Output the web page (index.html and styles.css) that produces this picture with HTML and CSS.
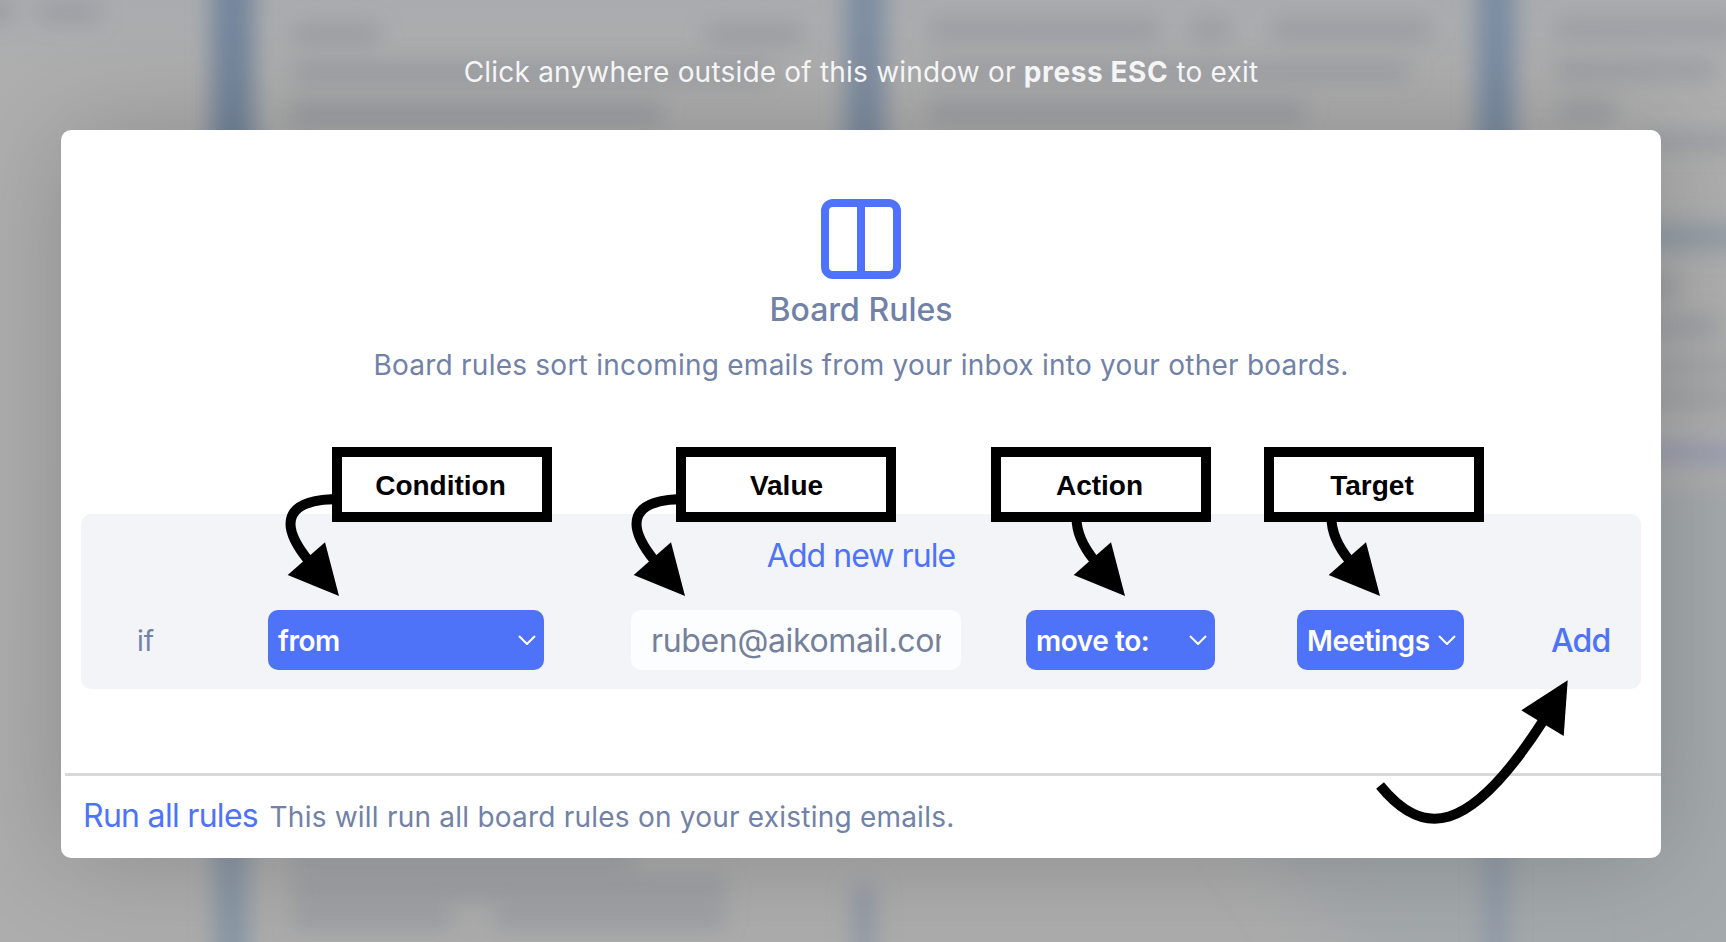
FILE: index.html
```
<!DOCTYPE html>
<html lang="en">
<head>
<meta charset="utf-8">
<title>Board Rules</title>
<link rel="stylesheet" href="styles.css">
</head>
<body>
<svg class="backdrop" viewBox="0 0 1726 942" aria-hidden="true">
  <defs>
    <filter id="soft" x="-20%" y="-20%" width="140%" height="140%"><feGaussianBlur stdDeviation="11"/></filter>
    <filter id="softer" x="-20%" y="-20%" width="140%" height="140%"><feGaussianBlur stdDeviation="28"/></filter>
    <linearGradient id="base" x1="0" y1="0" x2="0" y2="1"><stop offset="0" stop-color="#a9abae"/><stop offset=".08" stop-color="#afafaf"/><stop offset="1" stop-color="#adadad"/></linearGradient>
  </defs>
  <rect width="1726" height="942" fill="url(#base)"/>
  <g filter="url(#softer)">
    <path d="M1240 810L1800 450V1000H1380Z" fill="#a4a9ac"/>
  </g>
  <g filter="url(#soft)">
    <rect x="1640" y="490" width="140" height="500" fill="#a4a9ac"/>
    <rect x="211" y="-30" width="43" height="840" fill="#75869c"/>
    <rect x="214" y="800" width="34" height="180" fill="#8896a4"/>
    <rect x="845" y="-30" width="40" height="840" fill="#7e8da1"/>
    <rect x="852" y="885" width="24" height="95" fill="#9299a6"/>
    <rect x="1477" y="-30" width="38" height="800" fill="#7a8ca2"/>
    <rect x="1485" y="760" width="22" height="220" fill="#8e99a8"/>
    <g fill="#808692" opacity=".42">
      <rect x="-20" y="0" width="30" height="22"/><rect x="40" y="4" width="60" height="18"/>
      <rect x="292" y="24" width="88" height="20"/><rect x="706" y="24" width="96" height="20"/>
      <rect x="292" y="62" width="480" height="20"/><rect x="292" y="102" width="370" height="22"/>
      <rect x="930" y="20" width="230" height="20"/><rect x="1190" y="20" width="40" height="20"/><rect x="1272" y="20" width="158" height="20"/>
      <rect x="930" y="62" width="480" height="18"/><rect x="930" y="102" width="375" height="20"/>
      <rect x="1556" y="20" width="180" height="18"/><rect x="1556" y="60" width="160" height="20"/><rect x="1560" y="102" width="56" height="18"/>
      <rect x="1640" y="132" width="100" height="18"/>
      <rect x="1640" y="275" width="35" height="24"/><rect x="1640" y="318" width="80" height="18"/>
      <rect x="1640" y="360" width="110" height="12"/><rect x="1640" y="392" width="110" height="14"/>
      <rect x="292" y="850" width="340" height="14"/><rect x="292" y="878" width="435" height="20"/><rect x="292" y="908" width="160" height="20"/><rect x="495" y="908" width="230" height="20"/>
    </g>
    <rect x="1640" y="224" width="120" height="26" fill="#929ca5"/>
    <rect x="1640" y="446" width="120" height="14" fill="#9095b0"/>
  </g>
</svg>
<main class="overlay">
  <p class="hint">Click anywhere outside of this window or <b>press ESC</b> to exit</p>
  <section class="modal">
    <header class="intro">
      <svg class="board-icon" viewBox="0 0 80 80" fill="none" stroke="#4e73f8" stroke-width="8"><rect x="4" y="4" width="72" height="72" rx="8"/><path d="M40 4v72"/></svg>
      <h1 class="title">Board Rules</h1>
      <p class="lead">Board rules sort incoming emails from your inbox into your other boards.</p>
    </header>
    <div class="panel">
      <h2 class="panel-title">Add new rule</h2>
      <div class="rule">
        <span class="if">if</span>
        <div class="select select-condition"><span>from</span><svg class="chev" viewBox="0 0 18 10"><path d="M1 1l8 8 8-8"/></svg></div>
        <div class="value"><span class="value-text">ruben@aikomail.com</span></div>
        <div class="select select-action"><span>move to:</span><svg class="chev" viewBox="0 0 18 10"><path d="M1 1l8 8 8-8"/></svg></div>
        <div class="select select-target"><span>Meetings</span><svg class="chev" viewBox="0 0 18 10"><path d="M1 1l8 8 8-8"/></svg></div>
        <span class="add">Add</span>
      </div>
    </div>
    <footer class="foot"><span class="run">Run all rules</span><span class="note">This will run all board rules on your existing emails.</span></footer>
  </section>
</main>
<svg class="arrows" viewBox="0 0 1726 942" aria-hidden="true">
  <defs>
    <g id="arrow"><path d="M340 499C306 499 290.500 508 290.500 524C290.500 536 300 550 308 560" fill="none" stroke="#000" stroke-width="10"/><path d="M325 542.300L287.700 575L339 596Z"/></g>
    <g id="short"><path d="M290.500 518C290.500 536 300 550 308 560" fill="none" stroke="#000" stroke-width="10"/><path d="M325 542.300L287.700 575L339 596Z"/></g>
  </defs>
  <use href="#arrow"/><use href="#arrow" x="346"/>
  <use href="#short" x="786"/><use href="#short" x="1041"/>
  <path d="M1380 785.500C1422 837 1468 838 1543 721" fill="none" stroke="#000" stroke-width="10"/>
  <path d="M1567.700 680.300L1521.300 710.300L1563.700 736Z"/>
</svg>
<div class="tag tag-condition">Condition</div>
<div class="tag tag-value">Value</div>
<div class="tag tag-action">Action</div>
<div class="tag tag-target">Target</div>
</body>
</html>
```
FILE: styles.css
```
* { box-sizing: border-box; }
body { margin: 0; width: 1726px; height: 942px; overflow: hidden; position: relative; background: #adadad; font-family: Inter, "Liberation Sans", sans-serif; }
h1, h2, p { margin: 0; }
.backdrop, .arrows { position: absolute; inset: 0; width: 1726px; height: 942px; }
.overlay { position: relative; height: 942px; padding: 53px 65px 0 61px; }
.hint { height: 76.500px; padding-top: 1px; text-align: center; font-size: 28px; line-height: 36px; letter-spacing: .2px; color: #f5f5f5; white-space: nowrap; }
.hint b { font-weight: 700; letter-spacing: .6px; }
.modal { height: 728px; display: flex; flex-direction: column; background: #fff; border-radius: 10px; box-shadow: 0 0 110px rgba(0, 0, 0, .2); color: #7281a6; }
.intro { height: 384.500px; padding-top: 69.500px; display: flex; flex-direction: column; align-items: center; }
.board-icon { width: 80px; height: 80px; }
.title { margin-top: 10px; font-size: 32px; line-height: 41px; font-weight: 550; }
.lead { margin-top: 17px; font-size: 28px; line-height: 37px; letter-spacing: .24px; white-space: nowrap; }
.panel { height: 175px; margin: 0 20px; background: #f2f4f8; border-radius: 10px; }
.panel-title { height: 95.500px; padding-top: 22px; text-align: center; color: #4e73f8; font-size: 32px; font-weight: 400; line-height: 40px; letter-spacing: -.95px; }
.rule { display: flex; align-items: center; height: 60px; }
.if { width: 187px; padding: 2px 0 0 56px; font-size: 28px; }
.select { height: 60px; display: flex; align-items: center; justify-content: space-between; padding: 0 8px 0 10px; border-radius: 10px; background: #4e73f8; color: #fff; font-size: 28px; font-weight: 600; letter-spacing: -.45px; white-space: nowrap; }
.select span { padding-top: 2px; }
.select-condition { width: 276px; margin-right: 87px; }
.select-action { width: 189px; margin-right: 82px; }
.select-target { width: 167px; margin-right: 87px; }
.chev { flex: none; width: 18px; height: 10px; fill: none; stroke: #fff; stroke-width: 2; }
.value { width: 330px; height: 60px; margin-right: 65px; padding: 0 20px; border-radius: 10px; background: #fcfdff; color: #75809b; font-size: 32px; line-height: 62px; letter-spacing: -.35px; }
.value-text { display: block; height: 60px; overflow: hidden; white-space: nowrap; }
.add { padding-top: 1px; color: #4e73f8; font-size: 32px; font-weight: 500; letter-spacing: -.9px; }
.foot { margin: 84px 0 0 4px; height: 84px; padding-left: 18px; border-top: 3px solid #d8d8d8; display: flex; align-items: center; white-space: nowrap; }
.run { padding-bottom: 3px; color: #4e73f8; font-size: 32px; letter-spacing: -.7px; }
.note { margin-left: 11.500px; padding-top: 1px; font-size: 28px; letter-spacing: .22px; }
.tag { position: absolute; top: 447px; width: 220px; height: 75px; border: 10px solid #000; background: #fff; color: #000; display: flex; align-items: center; justify-content: center; padding: 2px 3px 0 0; font: 700 28px "Liberation Sans", Arial, sans-serif; }
.tag-condition { left: 332px; }
.tag-value { left: 676px; padding: 2px 0 0 1px; }
.tag-action { left: 991px; }
.tag-target { left: 1264px; padding-right: 4px; }
```
